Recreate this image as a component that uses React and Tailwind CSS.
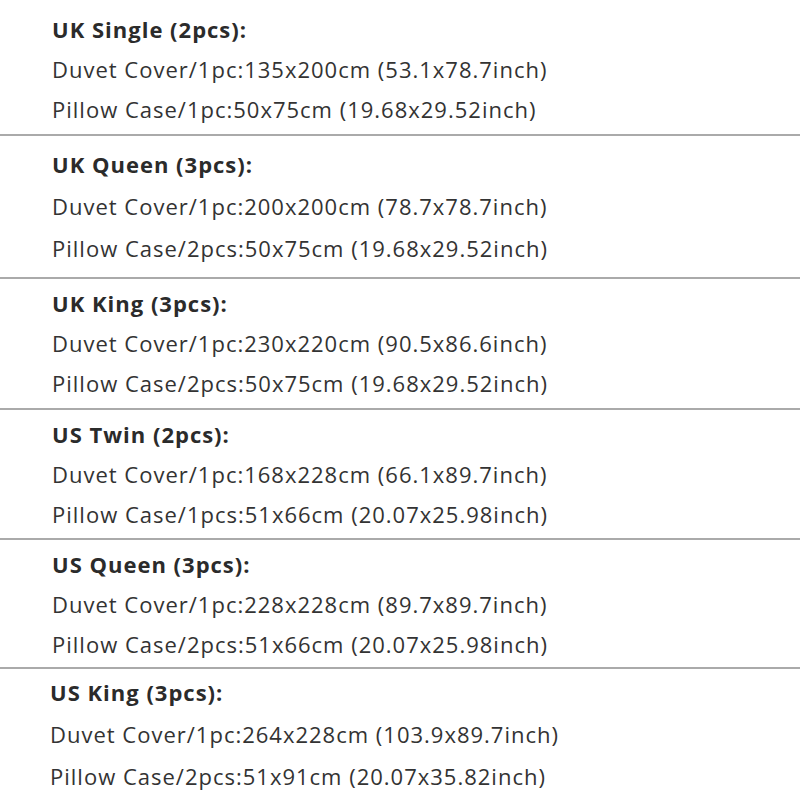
const sections = [
  {
    title: "UK Single (2pcs):",
    lines: ["Duvet Cover/1pc:135x200cm (53.1x78.7inch)", "Pillow Case/1pc:50x75cm (19.68x29.52inch)"],
    box: "pt-[9px] pb-[5px] pl-[52px]",
    row: "h-10",
  },
  {
    title: "UK Queen (3pcs):",
    lines: ["Duvet Cover/1pc:200x200cm (78.7x78.7inch)", "Pillow Case/2pcs:50x75cm (19.68x29.52inch)"],
    box: "pt-[7px] pb-[8px] pl-[52px]",
    row: "h-[42px]",
  },
  {
    title: "UK King (3pcs):",
    lines: ["Duvet Cover/1pc:230x220cm (90.5x86.6inch)", "Pillow Case/2pcs:50x75cm (19.68x29.52inch)"],
    box: "pt-[4px] pb-[5px] pl-[52px]",
    row: "h-10",
  },
  {
    title: "US Twin (2pcs):",
    lines: ["Duvet Cover/1pc:168x228cm (66.1x89.7inch)", "Pillow Case/1pcs:51x66cm (20.07x25.98inch)"],
    box: "pt-[4px] pb-[4px] pl-[52px]",
    row: "h-10",
  },
  {
    title: "US Queen (3pcs):",
    lines: ["Duvet Cover/1pc:228x228cm (89.7x89.7inch)", "Pillow Case/2pcs:51x66cm (20.07x25.98inch)"],
    box: "pt-[4px] pb-[3px] pl-[52px]",
    row: "h-10",
  },
  {
    title: "US King (3pcs):",
    lines: ["Duvet Cover/1pc:264x228cm (103.9x89.7inch)", "Pillow Case/2pcs:51x91cm (20.07x35.82inch)"],
    box: "pt-[2px] pl-[50px]",
    row: "h-[42px]",
  },
];

export default function App() {
  return (
    <div className="w-[800px] h-[800px] bg-white text-[#333] overflow-hidden font-['Open_Sans',sans-serif]">
      {sections.map((s, i) => (
        <div key={s.title}>
          <div className={s.box}>
            <div className={`${s.row} flex items-center text-[22px] tracking-[1px] font-bold text-[#2b2b2b]`}>{s.title}</div>
            {s.lines.map((l) => (
              <div key={l} className={`${s.row} flex items-center text-[22px] tracking-[1px]`}>
                {l}
              </div>
            ))}
          </div>
          {i < sections.length - 1 && <div className="h-[2px] bg-[#aaa]" />}
        </div>
      ))}
    </div>
  );
}
